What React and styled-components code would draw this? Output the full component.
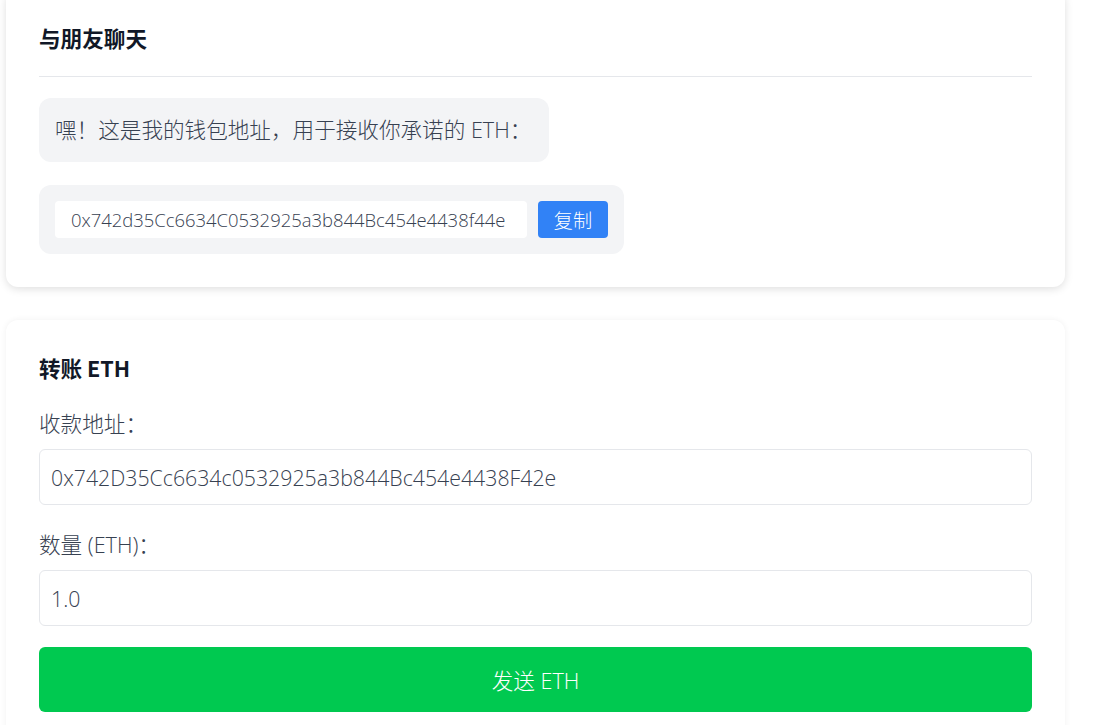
import styled, { createGlobalStyle } from 'styled-components';

const GlobalStyle = createGlobalStyle`
  html, body {
    margin: 0;
    padding: 0;
    background: #ffffff;
    overflow: hidden;
  }
  body {
    font-family: "Segoe UI", "Open Sans", "Noto Sans CJK SC", sans-serif;
    color: #374151;
  }
  * {
    box-sizing: border-box;
  }
`;

const Page = styled.div`
  width: 1059px;
  margin: -10px 0 0 6px;
  display: flex;
  flex-direction: column;
  gap: 33px;
`;

const Card = styled.section`
  background: #ffffff;
  border-radius: 12px;
  padding: 33px;
  box-shadow: ${({ $soft }) =>
    $soft ? '0 0 6px rgba(0, 0, 0, 0.06)' : '0 2px 8px rgba(0, 0, 0, 0.13)'};
  display: flex;
  flex-direction: column;
  align-items: flex-start;
`;

const Title = styled.h2`
  margin: 0;
  font-size: 21.6px;
  line-height: 30px;
  font-weight: 700;
  color: #111827;
  font-family: "Noto Sans CJK SC", "Open Sans", sans-serif;
`;

const Divider = styled.hr`
  align-self: stretch;
  border: none;
  border-top: 1px solid #e5e7eb;
  margin: 23px 0 21px;
`;

const Bubble = styled.div`
  background: #f3f4f6;
  border-radius: 12px;
  padding: 16px 18px 16px 16px;
  font-size: 21.6px;
  line-height: 32px;
  font-weight: 300;
  color: #374151;
`;

const AddressBox = styled.div`
  margin-top: 23px;
  background: #f3f4f6;
  border-radius: 12px;
  padding: 16px;
  display: flex;
  gap: 11px;
`;

const AddressField = styled.div`
  width: 472px;
  height: 37px;
  background: #ffffff;
  border-radius: 4px;
  padding: 0 16px;
  display: flex;
  align-items: center;
  font-size: 18.45px;
  font-weight: 300;
  color: #374151;
  white-space: nowrap;
  overflow: hidden;
`;

const CopyButton = styled.button`
  width: 70px;
  height: 37px;
  border: none;
  border-radius: 4px;
  background: #3182f6;
  color: #ffffff;
  font-family: "Noto Sans CJK SC", sans-serif;
  font-size: 19.2px;
  font-weight: 300;
  padding: 0;
`;

const Label = styled.label`
  margin-top: ${({ $first }) => ($first ? '26px' : '25px')};
  font-size: 21.6px;
  line-height: 30px;
  font-weight: 300;
  color: #374151;
`;

const Field = styled.input`
  margin-top: 10px;
  align-self: stretch;
  height: 56px;
  border: 1px solid #e5e7eb;
  border-radius: 6px;
  padding: 0 11px;
  font-family: inherit;
  font-size: 21.3px;
  font-weight: 300;
  color: #374151;
  background: #ffffff;
  outline: none;
`;

const SendButton = styled.button`
  margin-top: 21px;
  align-self: stretch;
  height: 65px;
  border: none;
  border-radius: 6px;
  background: #00c950;
  color: #ffffff;
  font-family: inherit;
  font-size: 21.6px;
  font-weight: 300;
`;

export default function App() {
  return (
    <>
      <GlobalStyle />
      <Page>
        <Card>
          <Title>与朋友聊天</Title>
          <Divider />
          <Bubble>嘿！这是我的钱包地址，用于接收你承诺的 ETH：</Bubble>
          <AddressBox>
            <AddressField>0x742d35Cc6634C0532925a3b844Bc454e4438f44e</AddressField>
            <CopyButton>复制</CopyButton>
          </AddressBox>
        </Card>
        <Card $soft>
          <Title>转账 ETH</Title>
          <Label $first>收款地址：</Label>
          <Field readOnly value="0x742D35Cc6634c0532925a3b844Bc454e4438F42e" />
          <Label>数量 (ETH)：</Label>
          <Field readOnly value="1.0" />
          <SendButton>发送 ETH</SendButton>
        </Card>
      </Page>
    </>
  );
}
